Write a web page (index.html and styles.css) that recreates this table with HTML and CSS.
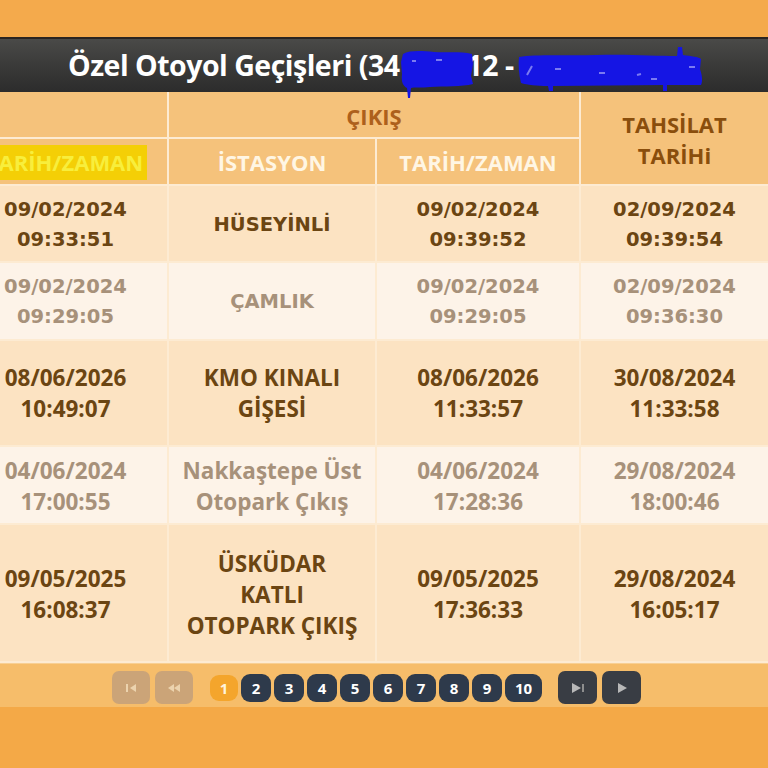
FILE: index.html
```html
<!DOCTYPE html>
<html lang="tr">
<head>
<meta charset="utf-8">
<title>Özel Otoyol Geçişleri</title>
<link rel="stylesheet" href="styles.css">
</head>
<body>
<div class="page">
  <div class="topband"></div>
  <div class="titlebar">
    <span class="ttext">Özel Otoyol Geçişleri (34</span>
    <svg class="blob blob1" width="74" height="50" viewBox="0 0 74 50">
      <path d="M3 6 C10 2 22 3 34 4 C46 5 60 3 72 6 L73 16 L71 28 L73 36 C62 39 44 38 30 39 C22 40 14 39 11 40 L10 50 L8 50 L7 40 C3 38 1 34 2 26 L1 14 Z" fill="#1515e4"/>
      <path d="M12 13 L16 13 M36 12 L42 12" stroke="#7b7bf0" stroke-width="2"/>
    </svg>
    <span class="ttext t2">12 -</span>
    <svg class="blob blob2" width="186" height="47" viewBox="0 0 186 47">
      <path d="M2 12 C20 9 50 11 80 10 C110 9 140 11 160 11 L161 2 L165 2 L166 10 C174 11 182 12 184 14 L183 24 C185 30 186 36 184 40 L150 40 L150 46 L146 46 L146 40 L36 41 L36 46 L32 46 L31 41 C20 41 10 40 4 38 C2 30 1 20 2 12 Z" fill="#1515e4"/>
      <path d="M10 30 L15 21 M38 24 L44 24 M82 28 L88 28 M120 30 L124 29 M172 22 L178 22 M134 34 L140 34" stroke="#7a7af2" stroke-width="2"/>
    </svg>
  </div>

  <table class="grid">
    <colgroup>
      <col class="c1"><col class="c2"><col class="c3"><col class="c4">
    </colgroup>
    <thead>
      <tr class="h1">
        <th></th>
        <th colspan="2" class="brown small">ÇIKIŞ</th>
        <th rowspan="2" class="brown">TAHSİLAT<br>TARİHi</th>
      </tr>
      <tr class="h2">
        <th><span class="hl">TARİH/ZAMAN</span></th>
        <th class="cream">İSTASYON</th>
        <th class="cream">TARİH/ZAMAN</th>
      </tr>
    </thead>
    <tbody>
      <tr class="dark v r1">
        <td>09/02/2024<br>09:33:51</td>
        <td>HÜSEYİNLİ</td>
        <td>09/02/2024<br>09:39:52</td>
        <td>02/09/2024<br>09:39:54</td>
      </tr>
      <tr class="light v r2">
        <td>09/02/2024<br>09:29:05</td>
        <td>ÇAMLIK</td>
        <td>09/02/2024<br>09:29:05</td>
        <td>02/09/2024<br>09:36:30</td>
      </tr>
      <tr class="dark o r3">
        <td>08/06/2026<br>10:49:07</td>
        <td>KMO KINALI<br>GİŞESİ</td>
        <td>08/06/2026<br>11:33:57</td>
        <td>30/08/2024<br>11:33:58</td>
      </tr>
      <tr class="light o r4">
        <td>04/06/2024<br>17:00:55</td>
        <td>Nakkaştepe Üst<br>Otopark Çıkış</td>
        <td>04/06/2024<br>17:28:36</td>
        <td>29/08/2024<br>18:00:46</td>
      </tr>
      <tr class="dark o r5">
        <td>09/05/2025<br>16:08:37</td>
        <td>ÜSKÜDAR<br>KATLI<br>OTOPARK ÇIKIŞ</td>
        <td>09/05/2025<br>17:36:33</td>
        <td>29/08/2024<br>16:05:17</td>
      </tr>
    </tbody>
  </table>

  <div class="pager">
    <span class="nav off"><svg width="12" height="10" viewBox="0 0 12 10"><rect x="1" y="1" width="2" height="8" fill="#ecd3ae"/><path d="M11 1 L5 5 L11 9 Z" fill="#ecd3ae"/></svg></span>
    <span class="nav off"><svg width="14" height="10" viewBox="0 0 14 10"><path d="M7 1 L1 5 L7 9 Z M13 1 L7 5 L13 9 Z" fill="#ecd3ae"/></svg></span>
    <span class="pages">
      <span class="pg cur">1</span>
      <span class="pg">2</span>
      <span class="pg">3</span>
      <span class="pg">4</span>
      <span class="pg">5</span>
      <span class="pg">6</span>
      <span class="pg">7</span>
      <span class="pg">8</span>
      <span class="pg">9</span>
      <span class="pg wide">10</span>
    </span>
    <span class="nav on"><svg width="14" height="12" viewBox="0 0 14 12"><path d="M1 1 L10 6 L1 11 Z" fill="#b8b8b8"/><rect x="11" y="2" width="2" height="8" fill="#8e8e8e"/></svg></span>
    <span class="nav on"><svg width="12" height="12" viewBox="0 0 12 12"><path d="M2 1 L11 6 L2 11 Z" fill="#b8b8b8"/></svg></span>
  </div>
  <div class="bottomband"></div>
</div>
</body>
</html>
```

FILE: styles.css
```css
* { box-sizing: border-box; }
html, body { margin: 0; padding: 0; }
body { background: #f4a94a; font-family: "Open Sans", "DejaVu Sans", sans-serif; }

.page {
  width: 768px;
  height: 768px;
  overflow: hidden;
  background: #f4a94a;
  display: flex;
  flex-direction: column;
}

.topband { height: 37px; flex: none; background: #f4aa4c; }

.titlebar {
  height: 55px;
  flex: none;
  background: linear-gradient(#4a4a48 0%, #3a3a39 50%, #2c2c2c 100%);
  border-top: 2px solid #2a2420;
  display: flex;
  align-items: center;
  padding-left: 68px;
  overflow: visible;
  position: relative;
  z-index: 2;
}
.ttext {
  color: #ffffff;
  font-weight: 700;
  font-size: 28.5px;
  letter-spacing: -0.5px;
  white-space: pre;
  line-height: 1;
}
.t2 { margin-left: -4px; }
.blob { flex: none; position: relative; z-index: 3; }
.blob1 { margin-left: 0; margin-top: 15px; margin-right: -3px; }
.blob2 { margin-left: 3px; margin-top: 6px; }

.grid {
  border-collapse: collapse;
  table-layout: fixed;
  width: 804px;
  margin-left: -36px;
  flex: none;
}
.c1 { width: 204px; }
.c2 { width: 208px; }
.c3 { width: 204px; }
.c4 { width: 188px; }

.grid th, .grid td {
  padding: 0;
  text-align: center;
  vertical-align: middle;
  border: 2px solid #fdebd2;
}
.grid th { background: #f5c27b; font-weight: 700; font-size: 22px; line-height: 31px; }
.h1 th { height: 46px; border-top: none; padding-top: 3px; }
.h2 th { height: 47px; border-top-width: 1px; padding-top: 2px; }
.grid thead tr th:first-child,
.grid tbody tr td:first-child { border-left: none; }
.grid thead tr th:last-child,
.grid tbody tr td:last-child { border-right: none; }
.brown { color: #8a4e0c; }
.small { font-size: 20px; color: #ad601c; }
.cream { color: #fff6e4; }
.hl {
  background: #f4cf06;
  color: #f8ee3c;
  padding: 2px 4px 3px 2px;
}

.grid td { font-weight: 700; }
.v td { font-family: "DejaVu Sans", Verdana, sans-serif; font-size: 19.5px; line-height: 30px; }
.o td { font-family: "Open Sans", sans-serif; font-size: 22.5px; line-height: 31px; }
.dark td { background: #fce3c2; color: #6b4512; }
.light td { background: #fdf3e8; color: #a7917a; }
.r1 td { height: 77px; padding-top: 2px; }
.r2 td { height: 78px; padding-top: 2px; }
.r3 td { height: 106px; }
.r4 td { height: 78px; padding-top: 2px; }
.r5 td { height: 138px; padding-top: 2px; }

.pager {
  height: 44px;
  flex: none;
  background: #f6bd6a;
  border-top: 1px solid #f8cf92;
  display: flex;
  align-items: center;
  padding-left: 112px;
  padding-top: 4px;
}
.nav {
  width: 38px;
  height: 33px;
  border-radius: 7px;
  display: flex;
  align-items: center;
  justify-content: center;
  flex: none;
  margin-right: 5px;
}
.nav.off { background: #cba478; }
.nav.on { background: #393d44; width: 39px; }
.pages { display: flex; gap: 3px; margin: 0 16px 0 12px; align-items: center; }
.pg {
  width: 30px;
  height: 28px;
  border-radius: 9px;
  background: #2e3a4b;
  color: #ffffff;
  font-weight: 700;
  font-size: 15px;
  display: flex;
  align-items: center;
  justify-content: center;
}
.pg.cur { background: #f4a52c; width: 28px; height: 26px; color: #fff4dc; }
.pg.wide { width: 37px; }

.bottomband { flex: 1; background: #f4a947; }
```
